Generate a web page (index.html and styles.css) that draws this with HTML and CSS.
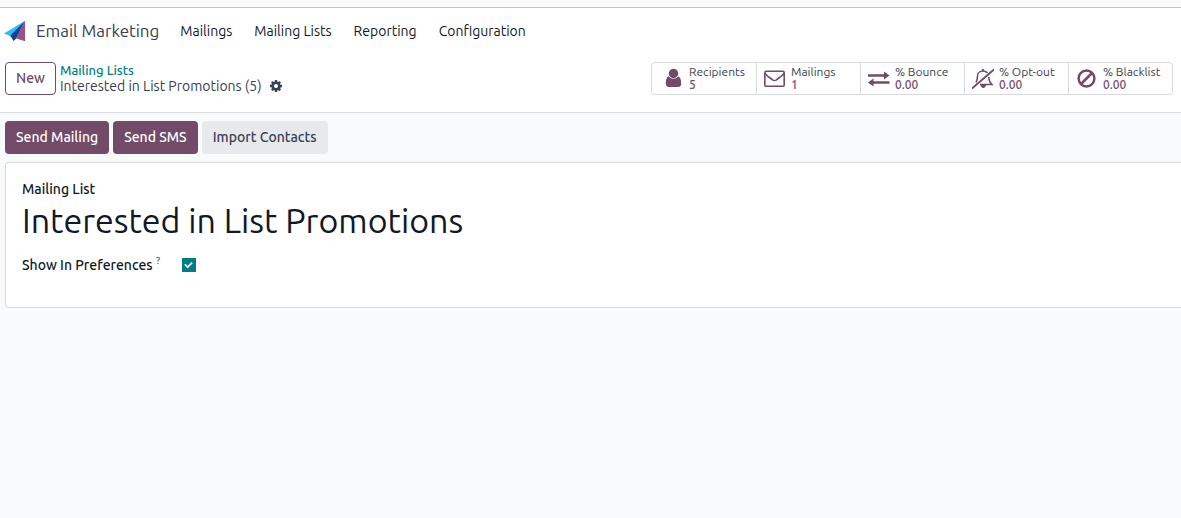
FILE: index.html
```html
<!DOCTYPE html>
<html lang="en">
<head>
<meta charset="utf-8">
<title>Interested in List Promotions - Email Marketing</title>
<link rel="stylesheet" href="styles.css">
</head>
<body>
<div class="browser-edge"></div>
<header class="navbar">
  <a class="brand" href="#">
    <svg class="brand-logo" viewBox="0 0 24 24" aria-hidden="true">
      <path d="M22 1.500v21L14 20z" fill="#985184"/>
      <path d="M21.500 1.500 0 14.500 7 17.500z" fill="#2ebcfa"/>
      <path d="M22 1 6.500 17l3.500 5.500 3-3z" fill="#144496"/>
      <path d="M22 1 12.500 19.500 22 22.500z" fill="#985184"/>
    </svg>
    <span>Email Marketing</span>
  </a>
  <nav class="menu">
    <a href="#">Mailings</a>
    <a href="#">Mailing Lists</a>
    <a href="#">Reporting</a>
    <a href="#">Configuration</a>
  </nav>
</header>
<section class="control-panel">
  <button class="btn btn-outline" type="button">New</button>
  <div class="breadcrumb">
    <a class="crumb-parent" href="#">Mailing Lists</a>
    <div class="crumb-current">
      <span>Interested in List Promotions (5)</span>
      <button class="cog" type="button" aria-label="Actions">
        <svg viewBox="0 -128 1536 1536" aria-hidden="true"><path fill="currentColor" d="M1024 640q0-106-75-181t-181-75-181 75-75 181 75 181 181 75 181-75 75-181zm512-109v222q0 12-8 23t-20 13l-185 28q-19 54-39 91 35 50 107 138 10 12 10 25t-9 23q-27 37-99 108t-94 71q-12 0-26-9l-138-108q-44 23-91 38-16 136-29 186-7 28-36 28h-222q-14 0-24.500-8.500t-11.500-21.500l-28-184q-49-16-90-37l-141 107q-10 9-25 9-14 0-25-11-126-114-165-168-7-10-7-23 0-12 8-23 15-21 51-66.500t54-70.500q-27-50-41-99l-183-27q-13-2-21-12.500t-8-23.500v-222q0-12 8-23t19-13l186-28q14-46 39-92-40-57-107-138-10-12-10-24 0-10 9-23 26-36 98.500-107.500t94.500-71.500q13 0 26 10l138 107q44-23 91-38 16-136 29-186 7-28 36-28h222q14 0 24.500 8.500t11.500 21.500l28 184q49 16 90 37l142-107q9-9 24-9 13 0 25 10 129 119 165 170 7 8 7 22 0 12-8 23-15 21-51 66.500t-54 70.500q26 50 41 98l183 28q13 2 21 12.500t8 23.500z"/></svg>
      </button>
    </div>
  </div>
  <div class="stats">
    <button class="stat" type="button">
      <svg class="stat-icon" viewBox="0 0 22 22" aria-hidden="true"><circle cx="11.500" cy="6.500" r="4.700" fill="currentColor"/><path d="M7 9.500C4.500 10 3.800 13 3.800 16.500c0 2.300 1.200 3.500 3 3.500h9.400c1.800 0 3-1.200 3-3.500 0-3.500-.7-6.500-3.200-7C14 12.500 9 12.500 7 9.500z" fill="currentColor"/></svg>
      <span class="stat-text"><span>Recipients</span><span class="stat-value">5</span></span>
    </button>
    <button class="stat" type="button">
      <svg class="stat-icon" viewBox="0 0 22 22" aria-hidden="true"><g fill="none" stroke="currentColor" stroke-width="1.600"><rect x=".8" y="4.300" width="19.400" height="15" rx="1.400"/><path d="M1 6c1 2.700 5.500 5 7.500 6.800 1.500 1 2.500 1 4 0C14.500 11 19 8.700 20 6"/></g></svg>
      <span class="stat-text"><span>Mailings</span><span class="stat-value">1</span></span>
    </button>
    <button class="stat" type="button">
      <svg class="stat-icon" viewBox="0 0 22 22" aria-hidden="true"><path fill="currentColor" d="M0 7.200h16V4.500l5.500 4-5.500 4V9.800H0zM21.500 14.200H5.500v-2.700L0 15.500l5.500 4v-2.700h16z"/></svg>
      <span class="stat-text"><span>% Bounce</span><span class="stat-value">0.00</span></span>
    </button>
    <button class="stat" type="button">
      <svg class="stat-icon" viewBox="0 0 22 22" aria-hidden="true"><g fill="none" stroke="currentColor"><path stroke-width="1.500" d="M4 15.500C5.300 13 5.500 11.500 5.500 9c0-3 2.500-5 5.500-5 2 0 3.500.8 4.500 2M16.700 10c.2 3.500 1.300 5.800 3.300 7.500H8"/><path stroke-width="1.900" d="M0 21.500 22 2.500"/><path stroke-width="1.800" d="M11 4V2"/></g><path fill="currentColor" d="M8.500 17.500H14c0 4.500-5.500 4.500-5.500 0z"/></svg>
      <span class="stat-text"><span>% Opt-out</span><span class="stat-value">0.00</span></span>
    </button>
    <button class="stat" type="button">
      <svg class="stat-icon" viewBox="0 0 22 22" aria-hidden="true"><g fill="none" stroke="currentColor" stroke-width="2.500"><circle cx="10.500" cy="11.500" r="7.900"/><path d="M5 17 16 6"/></g></svg>
      <span class="stat-text"><span>% Blacklist</span><span class="stat-value">0.00</span></span>
    </button>
  </div>
</section>
<main class="content">
  <div class="actions">
    <button class="btn btn-primary" type="button">Send Mailing</button>
    <button class="btn btn-primary" type="button">Send SMS</button>
    <button class="btn btn-light" type="button">Import Contacts</button>
  </div>
  <section class="sheet">
    <div class="label">Mailing List</div>
    <h1 class="title">Interested in List Promotions</h1>
    <div class="field">
      <label class="label" for="show">Show In Preferences <sup class="help">?</sup></label>
      <input class="check" id="show" type="checkbox" checked>
    </div>
  </section>
</main>
</body>
</html>
```
FILE: styles.css
```css
* { box-sizing: border-box; }
body {
  margin: 0;
  min-height: 100vh;
  display: flex;
  flex-direction: column;
  background: #f9fafb;
  color: #374151;
  font: 14px/16px Ubuntu, "Noto Sans", sans-serif;
}
a { color: inherit; text-decoration: none; }
button { font: inherit; color: inherit; margin: 0; cursor: pointer; }
.browser-edge { height: 8px; background: #fafafa; border-bottom: 1px solid #c4c4c4; }
.navbar { display: flex; align-items: center; height: 46px; padding-left: 4px; background: #fff; }
.brand { display: flex; align-items: center; gap: 9px; font-size: 17px; line-height: 24px; }
.brand-logo { width: 23px; height: 24px; }
.menu { display: flex; gap: 22px; margin-left: 21px; color: #111827; }
.control-panel {
  display: flex;
  align-items: center;
  height: 59px;
  padding: 0 8px 10px 5px;
  background: #fff;
  border-bottom: 1px solid #d8dadd;
}
.btn { height: 33px; padding: 0 10px 2px; border: 1px solid transparent; border-radius: 4px; font-weight: 500; white-space: nowrap; }
.btn-outline { padding-bottom: 0; background: #fff; border-color: #714b67; color: #714b67; }
.btn-primary { background: #714b67; color: #fff; }
.btn-light { background: #e7e9ed; color: #374151; }
.breadcrumb { margin-left: 4px; white-space: nowrap; }
.crumb-parent { display: block; color: #017e84; font-size: 13px; font-weight: 500; }
.crumb-current { display: flex; align-items: center; gap: 8px; }
.cog { display: flex; padding: 0; border: 0; background: none; }
.cog svg { width: 12px; height: 12px; }
.stats { display: flex; margin-left: auto; border: 1px solid #d8dadd; border-radius: 4px; }
.stat {
  display: flex;
  align-items: center;
  gap: 5px;
  width: 104px;
  height: 31px;
  padding: 0 0 0 7px;
  border: 0;
  background: none;
  font-size: 12px;
  line-height: 13px;
  text-align: left;
  white-space: nowrap;
}
.stat + .stat { border-left: 1px solid #d8dadd; }
.stat:first-child { padding-left: 10px; }
.stat-icon { flex: none; width: 22px; height: 22px; color: #714b67; }
.stat-text { display: flex; flex-direction: column; }
.stat-value { color: #714b67; font-weight: 500; }
.content { flex: 1; padding: 8px 0 0 5px; }
.actions { display: flex; gap: 4px; margin-bottom: 8px; }
.sheet {
  padding: 18px 16px 34px;
  background: #fff;
  border: 1px solid #d8dadd;
  border-right: 0;
  border-radius: 4px 0 0 4px;
  color: #111827;
}
.label { font-weight: 500; }
.title { margin: 3px 0 17px; font-size: 34px; line-height: 40px; font-weight: 400; }
.field { display: flex; align-items: center; gap: 22px; }
.help { color: #017e84; font-size: 10px; line-height: 0; font-weight: 500; }
.check {
  appearance: none;
  width: 14px;
  height: 14px;
  margin: 0;
  background: #017e84;
  display: grid;
  place-items: center;
}
.check:checked::before {
  content: "";
  width: 7px;
  height: 4px;
  border: solid #fff;
  border-width: 0 0 2px 2px;
  transform: translateY(-1px) rotate(-45deg) scale(0.8);
}
```
